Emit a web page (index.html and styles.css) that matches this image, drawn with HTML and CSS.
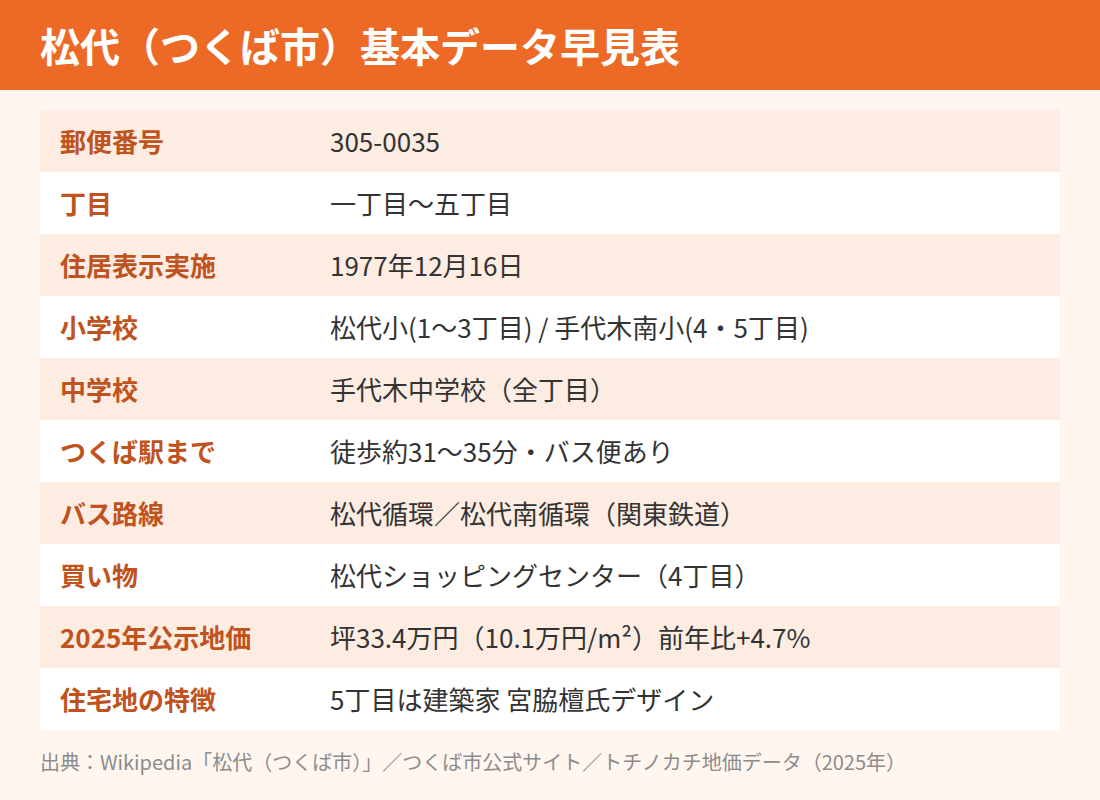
FILE: index.html
```html
<!DOCTYPE html>
<html lang="ja">
<head>
<meta charset="utf-8">
<link rel="stylesheet" href="styles.css">
</head>
<body>
<header class="hero">
  <h1 class="title">松代（つくば市）基本データ早見表</h1>
</header>
<main class="content">
  <div class="table">
    <div class="row"><div class="label">郵便番号</div><div class="value">305-0035</div></div>
    <div class="row"><div class="label">丁目</div><div class="value">一丁目〜五丁目</div></div>
    <div class="row"><div class="label">住居表示実施</div><div class="value">1977年12月16日</div></div>
    <div class="row"><div class="label">小学校</div><div class="value">松代小(1〜3丁目) / 手代木南小(4・5丁目)</div></div>
    <div class="row"><div class="label">中学校</div><div class="value">手代木中学校（全丁目）</div></div>
    <div class="row"><div class="label">つくば駅まで</div><div class="value">徒歩約31〜35分・バス便あり</div></div>
    <div class="row"><div class="label">バス路線</div><div class="value">松代循環／松代南循環（関東鉄道）</div></div>
    <div class="row"><div class="label">買い物</div><div class="value">松代ショッピングセンター（4丁目）</div></div>
    <div class="row"><div class="label">2025年公示地価</div><div class="value">坪33.4万円（10.1万円/m²）前年比+4.7%</div></div>
    <div class="row"><div class="label">住宅地の特徴</div><div class="value">5丁目は建築家 宮脇檀氏デザイン</div></div>
  </div>
  <p class="source">出典：Wikipedia「松代（つくば市）」／つくば市公式サイト／トチノカチ地価データ（2025年）</p>
</main>
</body>
</html>
```

FILE: styles.css
```css
html, body {
  margin: 0;
  padding: 0;
}
body {
  width: 1100px;
  height: 800px;
  background: #fff6f0;
  font-family: "Noto Sans CJK JP", "Noto Sans", sans-serif;
  overflow: hidden;
}
.hero {
  height: 90px;
  background: #ec6a26;
  display: flex;
  align-items: center;
  padding: 0 40px;
}
.title {
  margin: 0;
  color: #ffffff;
  font-size: 40px;
  font-weight: 700;
  line-height: 1;
}
.content {
  padding: 20px 40px 0;
}
.table {
  display: flex;
  flex-direction: column;
}
.row {
  height: 62px;
  display: flex;
  align-items: center;
  background: #ffffff;
}
.row:nth-child(odd) {
  background: #fcece2;
}
.label {
  width: 290px;
  padding-left: 20px;
  box-sizing: border-box;
  color: #c0531d;
  font-size: 26px;
  font-weight: 700;
  line-height: 1.2;
}
.value {
  color: #333333;
  font-size: 26px;
  line-height: 1.2;
}
.source {
  margin: 19px 0 0;
  color: #8c8c8c;
  font-size: 20px;
  line-height: 26px;
}
```
